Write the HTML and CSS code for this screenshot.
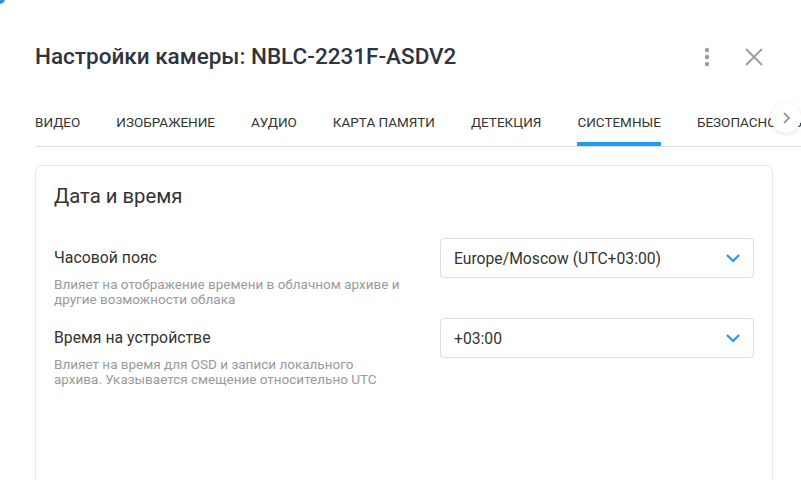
FILE: index.html
```html
<!DOCTYPE html>
<html lang="ru">
<head>
<meta charset="utf-8">
<link rel="stylesheet" href="styles.css">
</head>
<body>
<div class="corner"></div>
<div class="dialog">
  <header class="head">
    <h1 class="title">Настройки камеры: NBLC-2231F-ASDV2</h1>
    <div class="actions">
      <svg class="kebab" width="6" height="20" viewBox="0 0 6 20"><circle cx="3" cy="3" r="2.2" fill="#9a9ca3"/><circle cx="3" cy="10" r="2.2" fill="#9a9ca3"/><circle cx="3" cy="17" r="2.2" fill="#9a9ca3"/></svg>
      <svg class="close" width="18" height="18" viewBox="0 0 18 18"><path d="M1 1L17 17M17 1L1 17" stroke="#9a9ca3" stroke-width="1.8" fill="none"/></svg>
    </div>
  </header>
  <nav class="tabs">
    <div class="tab-track">
      <div class="tab">Видео</div>
      <div class="tab">Изображение</div>
      <div class="tab">Аудио</div>
      <div class="tab">Карта памяти</div>
      <div class="tab">Детекция</div>
      <div class="tab active">Системные</div>
      <div class="tab">Безопасность</div>
    </div>
    <button class="scroll-btn"><svg width="10" height="14" viewBox="0 0 10 14"><path d="M3 2L8 7L3 12" stroke="#9a9ca3" stroke-width="2" fill="none"/></svg></button>
  </nav>
  <section class="card">
    <h2 class="card-title">Дата и время</h2>
    <div class="row">
      <div class="info">
        <div class="label">Часовой пояс</div>
        <div class="desc">Влияет на отображение времени в облачном архиве и другие возможности облака</div>
      </div>
      <div class="select"><span>Europe/Moscow (UTC+03:00)</span><svg width="16" height="10" viewBox="0 0 16 10"><path d="M2 2L8 8L14 2" stroke="#1e9bf0" stroke-width="2.2" fill="none"/></svg></div>
    </div>
    <div class="row">
      <div class="info">
        <div class="label">Время на устройстве</div>
        <div class="desc">Влияет на время для OSD и записи локального архива. Указывается смещение относительно UTC</div>
      </div>
      <div class="select"><span>+03:00</span><svg width="16" height="10" viewBox="0 0 16 10"><path d="M2 2L8 8L14 2" stroke="#1e9bf0" stroke-width="2.2" fill="none"/></svg></div>
    </div>
  </section>
</div>
</body>
</html>
```
FILE: styles.css
```css
html, body {
  margin: 0;
  padding: 0;
  background: #fff;
  width: 801px;
  height: 480px;
  overflow: hidden;
  font-family: Roboto, "Noto Sans", sans-serif;
  color: #333;
}
.corner {
  position: absolute;
  left: -6px;
  top: -6px;
  width: 11px;
  height: 10px;
  background: #3a8fd9;
  border-radius: 0 0 5px 0;
}
.dialog {
  padding: 0 0 0 35px;
}
.head {
  height: 112px;
  display: flex;
  align-items: flex-start;
  justify-content: space-between;
}
.title {
  margin: 41px 0 0 0;
  font-size: 22.5px;
  font-weight: 500;
  color: #2e3440;
  line-height: 30px;
}
.actions {
  margin-top: 47px;
  margin-right: 38px;
  display: flex;
  align-items: center;
  gap: 35px;
}
.close { margin-top: -1px; }
.tabs {
  position: relative;
  height: 34px;
  border-bottom: 1px solid #dcdce3;
}
.tab-track {
  display: flex;
  gap: 36px;
  white-space: nowrap;
  overflow: hidden;
  height: 34px;
}
.tab {
  flex: none;
  text-transform: uppercase;
  font-size: 13.5px;
  color: #333;
  line-height: 18px;
  padding-top: 1px;
  position: relative;
}
.tab.active::after {
  content: "";
  position: absolute;
  left: 0;
  right: 0;
  top: 30px;
  height: 4px;
  background: #1e9bf0;
}
.scroll-btn {
  position: absolute;
  left: 736px;
  top: -9px;
  width: 30px;
  height: 30px;
  border-radius: 50%;
  border: none;
  background: #fff;
  box-shadow: 0 1px 4px rgba(0,0,0,0.12);
  display: flex;
  align-items: center;
  justify-content: center;
  padding: 0;
}
.card {
  margin-top: 18px;
  width: 700px;
  height: 340px;
  border: 1px solid #e6e6ea;
  border-radius: 6px;
  padding: 0 18px 0 18px;
}
.card-title {
  margin: 16px 0 0 0;
  font-size: 20.3px;
  font-weight: 400;
  color: #333;
  line-height: 28px;
  height: 56px;
}
.row {
  display: flex;
  justify-content: space-between;
  height: 80px;
}
.info {
  width: 348px;
  padding-top: 11px;
}
.label {
  font-size: 15.8px;
  line-height: 18px;
  color: #333;
}
.desc {
  margin-top: 10px;
  font-size: 13.5px;
  line-height: 15px;
  color: #9a9a9a;
}
.select {
  box-sizing: border-box;
  width: 314px;
  height: 40px;
  border: 1px solid #dcdce0;
  border-radius: 4px;
  display: flex;
  align-items: center;
  justify-content: space-between;
  padding: 0 12px 0 13px;
  font-size: 15.7px;
  color: #333;
}
```
